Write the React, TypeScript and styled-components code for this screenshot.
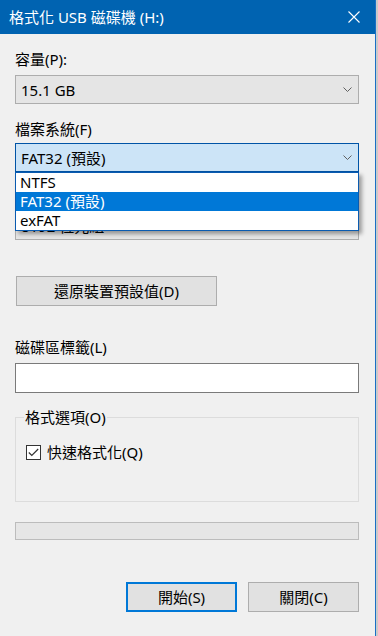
import React from 'react';
import styled, { createGlobalStyle } from 'styled-components';

const GlobalStyle = createGlobalStyle`
  body {
    margin: 0;
    background: #cacaca;
    font-family: "Noto Sans", "Noto Sans CJK TC", sans-serif;
    font-size: 15px;
    color: #000;
  }
`;

const Window = styled.div`
  width: 376px;
  height: 636px;
  box-sizing: border-box;
  background: #f0f0f0;
  border-right: 1px solid #1a6fc6;
  display: flex;
  flex-direction: column;
  overflow: hidden;
`;

const TitleBar = styled.div`
  height: 34px;
  flex: none;
  background: #0063b1;
  color: #fff;
  display: flex;
  align-items: center;
  justify-content: space-between;
  padding: 0 15px 0 9px;
  font-size: 15px;
`;

const Title = styled.span`
  line-height: 20px;
`;

const CloseIcon = styled.svg`
  display: block;
`;

const Body = styled.main`
  display: flex;
  flex-direction: column;
  padding: 0 16px 0 15px;
`;

const Label = styled.div<{ $top: number }>`
  margin-top: ${(p) => p.$top}px;
  height: 20px;
  line-height: 20px;
  white-space: nowrap;
`;

const Combo = styled.div<{ $top: number; $focused?: boolean }>`
  position: relative;
  margin-top: ${(p) => p.$top}px;
  height: 29px;
  box-sizing: border-box;
  border: 1px solid ${(p) => (p.$focused ? '#0054a6' : '#adadad')};
  background: ${(p) => (p.$focused ? '#cce4f7' : '#e5e5e5')};
  display: flex;
  align-items: center;
  justify-content: space-between;
  padding: 0 6px 0 5px;
  line-height: 20px;
`;

const Chevron = styled.svg`
  display: block;
`;

const DropList = styled.div`
  position: absolute;
  top: 28px;
  left: -1px;
  right: -1px;
  z-index: 2;
  background: #fff;
  border: 1px solid #0a5bb0;
  box-shadow: 3px 3px 4px rgba(0, 0, 0, 0.35);
`;

const Option = styled.div<{ $selected?: boolean }>`
  height: 19px;
  line-height: 19px;
  padding-left: 4px;
  background: ${(p) => (p.$selected ? '#0078d7' : '#fff')};
  color: ${(p) => (p.$selected ? '#fff' : '#000')};
`;

const Button = styled.button<{ $primary?: boolean; $width: number }>`
  width: ${(p) => p.$width}px;
  height: 30px;
  box-sizing: border-box;
  border: ${(p) => (p.$primary ? '2px solid #0078d7' : '1px solid #adadad')};
  background: #e1e1e1;
  font: inherit;
  color: #000;
  padding: 0;
  line-height: 20px;
`;

const ResetButton = styled(Button)`
  margin-top: 36px;
  margin-left: 1px;
`;

const TextInput = styled.div`
  margin-top: 6px;
  height: 30px;
  box-sizing: border-box;
  border: 1px solid #7a7a7a;
  background: #fff;
`;

const GroupBox = styled.fieldset`
  margin: 14px 0 0;
  height: 95px;
  box-sizing: border-box;
  border: 1px solid #dcdcdc;
  padding: 0 8px;
  min-width: 0;
`;

const Legend = styled.legend`
  padding: 0 1px;
  line-height: 20px;
`;

const CheckRow = styled.label`
  margin-top: 15px;
  margin-left: 2px;
  display: flex;
  align-items: center;
  gap: 6px;
  line-height: 20px;
`;

const CheckBox = styled.span`
  width: 15px;
  height: 15px;
  box-sizing: border-box;
  border: 1px solid #333;
  background: #fff;
  display: flex;
  align-items: center;
  justify-content: center;
`;

const Progress = styled.div`
  margin-top: 20px;
  height: 18px;
  box-sizing: border-box;
  border: 1px solid #bcbcbc;
  background: #e6e6e6;
`;

const ButtonRow = styled.div`
  margin-top: 42px;
  display: flex;
  justify-content: flex-end;
  gap: 11px;
`;

const ChevronIcon = () => (
  <Chevron width="9" height="5" viewBox="0 0 9 5">
    <polyline points="0.5,0.5 4.5,4.5 8.5,0.5" fill="none" stroke="#606060" strokeWidth="1" />
  </Chevron>
);

const App: React.FC = () => {
  const fileSystems = ['NTFS', 'FAT32 (預設)', 'exFAT'];

  return (
    <>
      <GlobalStyle />
      <Window>
        <TitleBar>
          <Title>格式化 USB 磁碟機 (H:)</Title>
          <CloseIcon width="12" height="12" viewBox="0 0 12 12">
            <path d="M0.5 0.5 L11.5 11.5 M11.5 0.5 L0.5 11.5" stroke="#fff" strokeWidth="1.1" />
          </CloseIcon>
        </TitleBar>
        <Body>
          <Label $top={15}>容量(P):</Label>
          <Combo $top={6}>
            <span>15.1 GB</span>
            <ChevronIcon />
          </Combo>

          <Label $top={15}>檔案系統(F)</Label>
          <Combo $top={4} $focused>
            <span>FAT32 (預設)</span>
            <ChevronIcon />
            <DropList>
              {fileSystems.map((name) => (
                <Option key={name} $selected={name === 'FAT32 (預設)'}>
                  {name}
                </Option>
              ))}
            </DropList>
          </Combo>

          <Label $top={15}>配置單位大小(A)</Label>
          <Combo $top={4}>
            <span>8192 位元組</span>
            <ChevronIcon />
          </Combo>

          <ResetButton $width={201}>還原裝置預設值(D)</ResetButton>

          <Label $top={31}>磁碟區標籤(L)</Label>
          <TextInput />

          <GroupBox>
            <Legend>格式選項(O)</Legend>
            <CheckRow>
              <CheckBox>
                <svg width="11" height="9" viewBox="0 0 11 9">
                  <polyline points="0.8,4.5 3.8,7.5 10.2,1" fill="none" stroke="#333" strokeWidth="1.2" />
                </svg>
              </CheckBox>
              快速格式化(Q)
            </CheckRow>
          </GroupBox>

          <Progress />

          <ButtonRow>
            <Button $primary $width={111}>開始(S)</Button>
            <Button $width={111}>關閉(C)</Button>
          </ButtonRow>
        </Body>
      </Window>
    </>
  );
};

export default App;
